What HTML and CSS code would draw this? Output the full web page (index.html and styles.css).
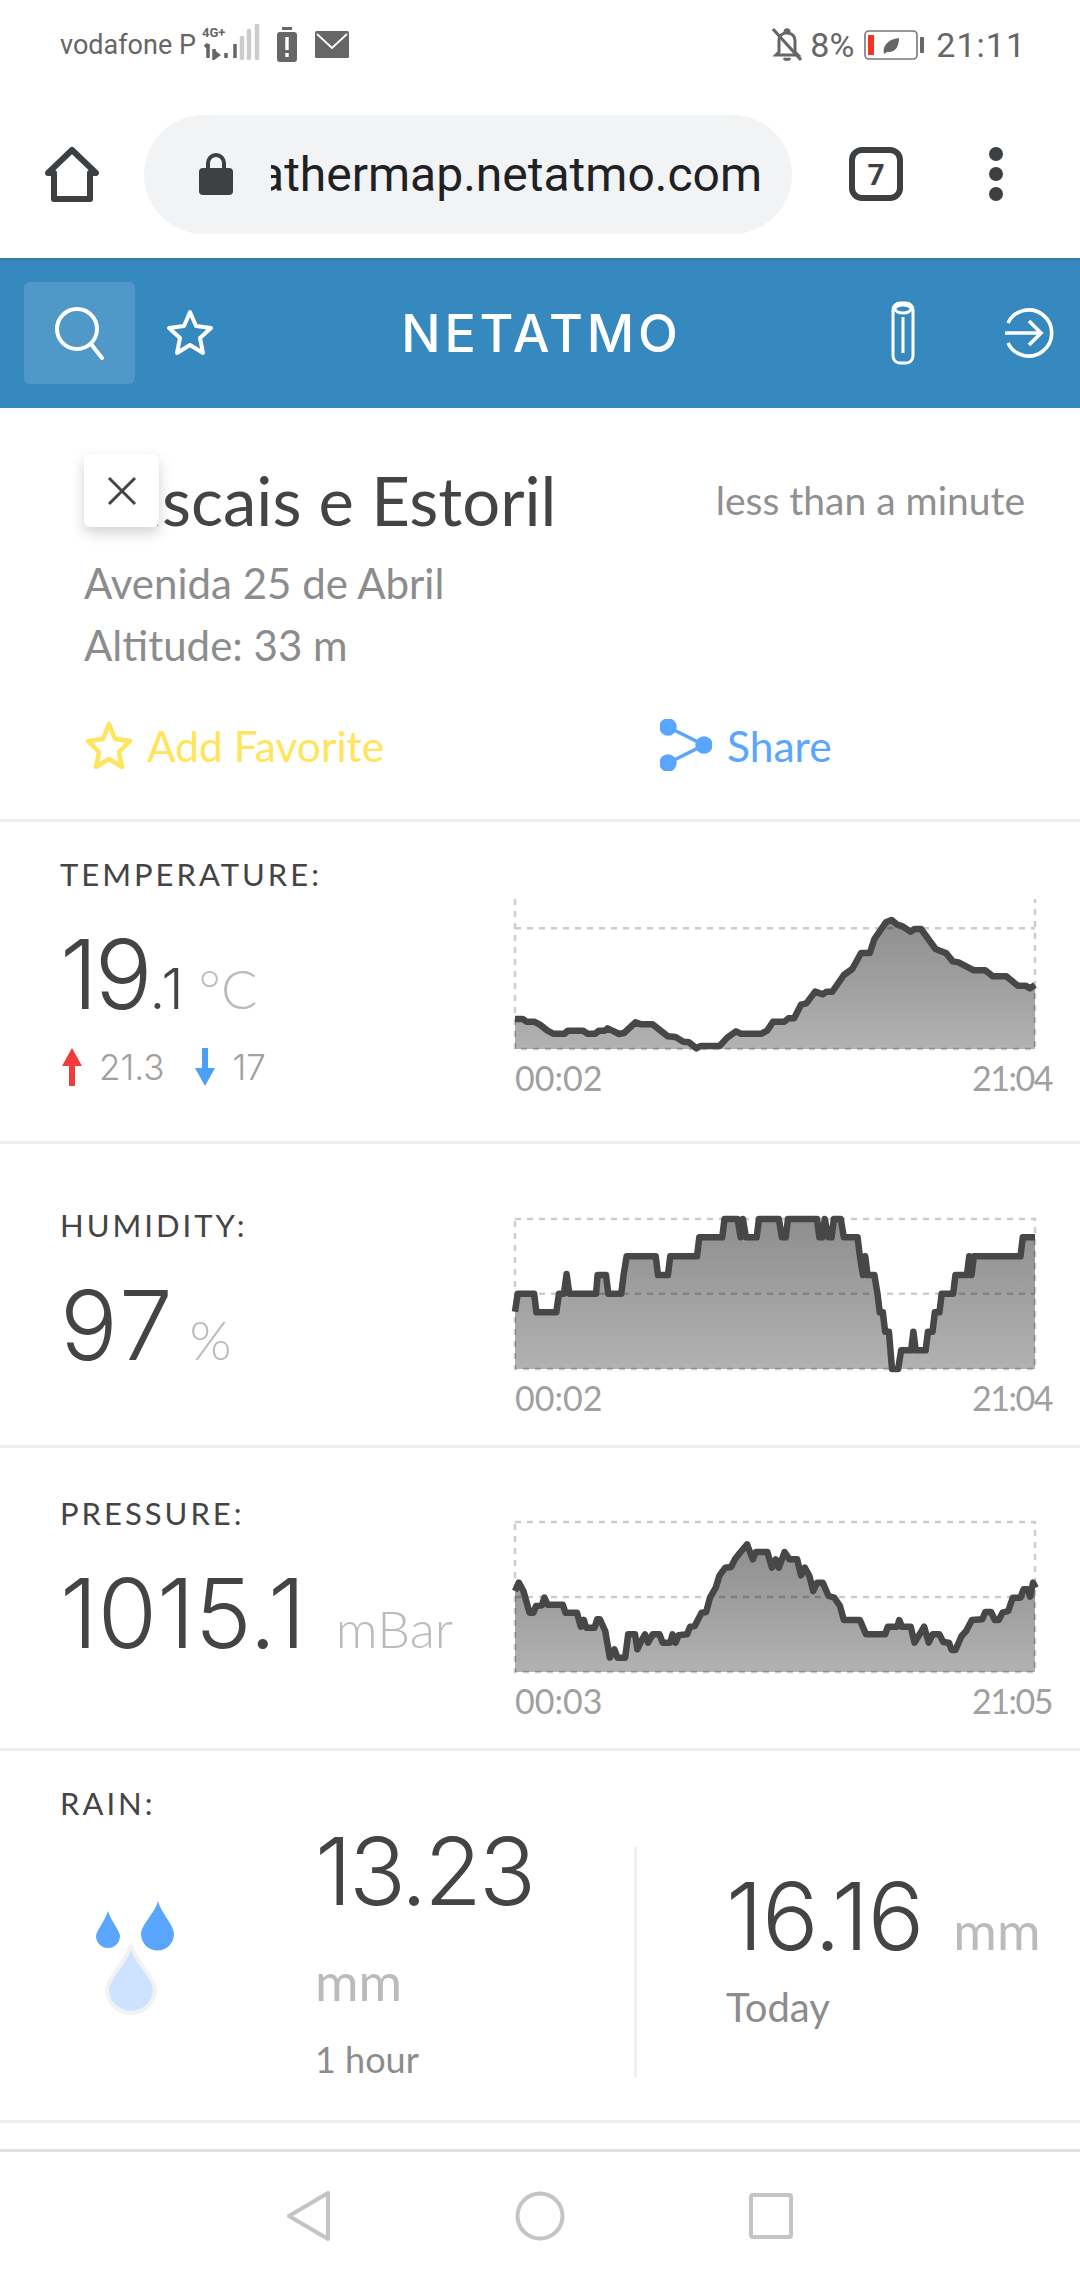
FILE: index.html
```html
<!DOCTYPE html>
<html lang="en">
<head>
  <meta charset="UTF-8" />
  <meta name="viewport" content="width=device-width, initial-scale=1.0"/>
  <title>Netatmo Weathermap</title>
  <link rel="stylesheet" href="styles.css">
</head>
<body>
  <div class="status-bar">
    <div class="status-left">
      <span class="carrier">vodafone P</span>
      <svg class="signal" width="62" height="36" viewBox="0 0 62 36">
        <text x="3" y="13" class="net-type">4G+</text>
        <path d="M9 20v14M6 23l3-3M15 25v9l4-3-4-3M27 29v5M36 20v14" stroke="#666" stroke-width="3.5" fill="none"/>
        <path d="M43 14v20M50 7v27M58 1v33" stroke="#ccc" stroke-width="4.5" stroke-linecap="round" fill="none"/>
      </svg>
      <svg class="alert-batt" width="20" height="35" viewBox="0 0 20 35">
        <rect x="5" y="0" width="10" height="3" fill="#666"/>
        <rect x="0" y="5" width="20" height="30" rx="3" fill="#666"/>
        <path d="M10 10v13M10 26v4" stroke="#fff" stroke-width="3.4"/>
      </svg>
      <svg class="mail" width="34" height="27" viewBox="0 0 34 27">
        <rect width="34" height="27" rx="1.5" fill="#666"/>
        <path d="M2 3l15 14L32 3" stroke="#fff" stroke-width="1.8" fill="none"/>
      </svg>
    </div>
    <div class="status-right">
      <svg width="30" height="34" viewBox="0 0 30 34" fill="none" stroke="#666" stroke-width="3">
        <path d="M7 12c0-4 3-7 8-7s8 3 8 8v11l3 3H4l3-3zM12 30c1 2 5 2 6 0M13 4c0-3 4-3 4 0"/>
        <path d="M1 1l28 31" stroke-width="3"/>
      </svg>
      <span class="batt-pct">8%</span>
      <svg width="60" height="30" viewBox="0 0 60 30">
        <rect x="1" y="1" width="52" height="28" rx="4" fill="#fff" stroke="#777" stroke-width="1.6"/>
        <rect x="4" y="5" width="6" height="20" fill="#f5331f"/>
        <path d="M20 24c-2-8 4-15 15-16 0 9-4 15-12 14z" fill="#666"/>
        <rect x="56" y="7" width="4" height="16" rx="1" fill="#666"/>
      </svg>
      <span class="clock">21:11</span>
    </div>
  </div>

  <div class="browser-bar">
    <svg class="home-icon" width="54" height="56" viewBox="0 0 54 56" fill="none" stroke="#3c4043" stroke-width="6" stroke-linejoin="round">
      <path d="M3 27L27 4l24 23h-6v26H9V27z"/>
    </svg>
    <div class="url-pill">
      <svg width="34" height="42" viewBox="0 0 34 42">
        <path d="M9 17V10a8 8 0 0 1 16 0v7" fill="none" stroke="#3c4043" stroke-width="4"/>
        <rect x="0" y="15" width="34" height="27" rx="4" fill="#3c4043"/>
      </svg>
      <div class="url-text"><span>weathermap.netatmo.com</span></div>
    </div>
    <div class="tab-count">7</div>
    <div class="menu-dots"><i></i><i></i><i></i></div>
  </div>

  <header class="site-header">
    <div class="header-left">
      <div class="search-btn">
        <svg width="52" height="54" viewBox="0 0 52 54" fill="none" stroke="#fff" stroke-width="4">
          <circle cx="23" cy="23" r="20"/>
          <path d="M37 38l11 14" stroke-linecap="round"/>
        </svg>
      </div>
      <svg class="star" width="48" height="48" viewBox="0 0 48 48" fill="none" stroke="#fff" stroke-width="4" stroke-linejoin="round">
        <path d="M24 3l6 14 15 2-11 10 3 15-13-8-13 8 3-15L3 19l15-2z"/>
      </svg>
    </div>
    <div class="logo">NETATMO</div>
    <div class="header-right">
      <svg width="24" height="64" viewBox="0 0 24 64" fill="none" stroke="#fff" stroke-width="3">
        <rect x="2" y="2" width="20" height="60" rx="7"/>
        <ellipse cx="12" cy="8" rx="8" ry="4"/>
        <path d="M12 16v36"/>
      </svg>
      <svg width="52" height="52" viewBox="0 0 52 52" fill="none" stroke="#fff" stroke-width="3.6">
        <path d="M5 16a23 23 0 1 1 0 20"/>
        <path d="M2 26h34M26 14l12 12-12 12"/>
      </svg>
    </div>
  </header>

  <section class="station">
    <div class="close-btn">
      <svg width="30" height="30" viewBox="0 0 30 30" stroke="#444" stroke-width="3"><path d="M2 2l26 26M28 2L2 28"/></svg>
    </div>
    <div class="title-row">
      <h1>Cascais e Estoril</h1>
      <span class="updated">less than a minute</span>
    </div>
    <div class="station-info">Avenida 25 de Abril</div>
    <div class="station-info">Altitude: 33 m</div>
    <div class="actions">
      <a class="action fav">
        <svg width="46" height="48" viewBox="0 0 46 48" fill="none" stroke="#ffe45c" stroke-width="4.5" stroke-linejoin="round"><path d="M23 3l6 15 15 2-11 11 3 15-13-8-13 8 3-15L2 20l15-2z"/></svg>
        Add Favorite
      </a>
      <a class="action share">
        <svg width="52" height="52" viewBox="0 0 52 52" fill="#5aa5ff" stroke="#5aa5ff" stroke-width="3.5"><circle cx="8" cy="8" r="7"/><circle cx="44" cy="26" r="7"/><circle cx="8" cy="44" r="7"/><path d="M8 8l36 18L8 44" fill="none"/></svg>
        Share
      </a>
    </div>
  </section>

  <section class="metric metric-temp">
    <div class="metric-main">
      <div class="metric-label">TEMPERATURE:</div>
      <div class="reading"><span class="big">19</span><span class="decimal">.1</span><span class="unit">°C</span></div>
      <div class="minmax">
        <svg width="22" height="38" viewBox="0 0 22 38" fill="#f23b3b"><path d="M11 0l10 18h-7v20H8V18H1z"/></svg>
        <span>21.3</span>
        <svg class="down" width="22" height="38" viewBox="0 0 22 38" fill="#4ba0f5"><path d="M11 38l10-18h-7V0H8v20H1z"/></svg>
        <span>17</span>
      </div>
    </div>
    <div class="chart">
      <svg width="520" height="150" viewBox="90 120 1360 450" preserveAspectRatio="none">
        <defs>
          <linearGradient id="areaFill" x1="0" y1="0" x2="0" y2="1">
            <stop offset="0" stop-color="#8e8e8e"/>
            <stop offset="1" stop-color="#b2b2b2"/>
          </linearGradient>
        </defs>
        <path class="area" d="M90 480L110 480 120 488 140 488 155 497 175 515 190 524 220 524 228 515 268 515 280 524 300 524 310 515 325 515 332 508 345 515 362 525 375 522 405 490 420 496 450 496 490 532 510 534 530 548 545 550 565 568 575 561 625 561 645 536 668 517 680 524 735 524 750 514 765 488 795 488 805 478 820 478 838 437 852 433 875 398 895 406 905 398 920 398 950 348 972 330 995 282 1018 282 1030 240 1060 190 1075 183 1090 197 1105 203 1125 218 1135 210 1152 210 1190 270 1218 283 1235 307 1250 310 1290 334 1320 334 1340 352 1375 352 1405 380 1425 380 1437 388 1450 378V570H90z"/>
        <path class="dash" d="M90 120V570H1450V120M90 208H1450"/>
        <path class="line" d="M90 480L110 480 120 488 140 488 155 497 175 515 190 524 220 524 228 515 268 515 280 524 300 524 310 515 325 515 332 508 345 515 362 525 375 522 405 490 420 496 450 496 490 532 510 534 530 548 545 550 565 568 575 561 625 561 645 536 668 517 680 524 735 524 750 514 765 488 795 488 805 478 820 478 838 437 852 433 875 398 895 406 905 398 920 398 950 348 972 330 995 282 1018 282 1030 240 1060 190 1075 183 1090 197 1105 203 1125 218 1135 210 1152 210 1190 270 1218 283 1235 307 1250 310 1290 334 1320 334 1340 352 1375 352 1405 380 1425 380 1437 388 1450 378"/>
      </svg>
      <div class="chart-times"><span>00:02</span><span>21:04</span></div>
    </div>
  </section>

  <section class="metric metric-hum">
    <div class="metric-main">
      <div class="metric-label">HUMIDITY:</div>
      <div class="reading"><span class="big">97</span><span class="unit">%</span></div>
    </div>
    <div class="chart">
      <svg width="520" height="150" viewBox="90 90 1360 450" preserveAspectRatio="none">
        <path class="area" d="M90 368L97 314 140 314 146 370 198 370 205 314 218 314 225 255 232 314 302 314 306 258 328 258 334 314 368 314 374 258 382 202 458 202 464 258 490 258 496 202 566 202 572 145 632 145 638 90 672 90 680 145 686 90 694 145 722 145 728 90 780 90 788 145 798 145 804 90 880 90 886 145 894 145 900 90 910 145 918 145 924 90 942 90 950 145 986 145 992 202 1000 258 1006 202 1012 258 1030 258 1038 314 1044 370 1052 370 1058 428 1068 428 1076 540 1092 540 1100 484 1126 484 1132 428 1138 484 1164 484 1170 428 1182 428 1188 370 1200 370 1206 314 1236 314 1242 258 1272 258 1278 202 1284 258 1290 202 1412 202 1418 145 1450 145V540H90z"/>
        <path class="dash" d="M90 90H1450V540H90zM90 314H1450"/>
        <path class="line" d="M90 368L97 314 140 314 146 370 198 370 205 314 218 314 225 255 232 314 302 314 306 258 328 258 334 314 368 314 374 258 382 202 458 202 464 258 490 258 496 202 566 202 572 145 632 145 638 90 672 90 680 145 686 90 694 145 722 145 728 90 780 90 788 145 798 145 804 90 880 90 886 145 894 145 900 90 910 145 918 145 924 90 942 90 950 145 986 145 992 202 1000 258 1006 202 1012 258 1030 258 1038 314 1044 370 1052 370 1058 428 1068 428 1076 540 1092 540 1100 484 1126 484 1132 428 1138 484 1164 484 1170 428 1182 428 1188 370 1200 370 1206 314 1236 314 1242 258 1272 258 1278 202 1284 258 1290 202 1412 202 1418 145 1450 145"/>
      </svg>
      <div class="chart-times"><span>00:02</span><span>21:04</span></div>
    </div>
  </section>

  <section class="metric metric-press">
    <div class="metric-main">
      <div class="metric-label">PRESSURE:</div>
      <div class="reading"><span class="big">1015.1</span><span class="unit unit-wide">mBar</span></div>
    </div>
    <div class="chart">
      <svg width="520" height="150" viewBox="90 68 1360 450" preserveAspectRatio="none">
        <path class="area" d="M90 275L100 250 112 275 128 340 138 340 145 320 160 318 167 295 175 316 215 316 222 340 252 340 262 382 270 362 276 385 298 385 305 360 312 360 326 395 338 475 350 450 358 475 378 475 386 405 404 405 410 450 418 430 430 405 438 430 450 405 468 405 476 430 496 430 502 405 510 430 518 408 540 405 548 382 560 380 578 340 590 338 600 295 615 265 625 228 640 205 655 203 665 180 680 158 697 135 712 180 720 158 750 158 762 205 772 180 780 205 795 158 808 180 828 180 838 228 848 205 860 230 870 275 880 250 895 250 910 290 925 295 940 320 950 362 992 362 1008 405 1058 405 1065 382 1090 382 1095 362 1102 382 1125 382 1135 430 1148 405 1160 382 1172 430 1182 405 1200 405 1210 428 1225 430 1232 452 1242 452 1258 410 1270 395 1285 362 1312 360 1320 338 1335 338 1345 362 1355 362 1365 340 1380 335 1392 295 1412 295 1420 270 1432 270 1437 292 1445 250 1450 262V518H90z"/>
        <path class="dash" d="M90 68H1450V518H90zM90 293H1450"/>
        <path class="line" d="M90 275L100 250 112 275 128 340 138 340 145 320 160 318 167 295 175 316 215 316 222 340 252 340 262 382 270 362 276 385 298 385 305 360 312 360 326 395 338 475 350 450 358 475 378 475 386 405 404 405 410 450 418 430 430 405 438 430 450 405 468 405 476 430 496 430 502 405 510 430 518 408 540 405 548 382 560 380 578 340 590 338 600 295 615 265 625 228 640 205 655 203 665 180 680 158 697 135 712 180 720 158 750 158 762 205 772 180 780 205 795 158 808 180 828 180 838 228 848 205 860 230 870 275 880 250 895 250 910 290 925 295 940 320 950 362 992 362 1008 405 1058 405 1065 382 1090 382 1095 362 1102 382 1125 382 1135 430 1148 405 1160 382 1172 430 1182 405 1200 405 1210 428 1225 430 1232 452 1242 452 1258 410 1270 395 1285 362 1312 360 1320 338 1335 338 1345 362 1355 362 1365 340 1380 335 1392 295 1412 295 1420 270 1432 270 1437 292 1445 250 1452 265"/>
      </svg>
      <div class="chart-times"><span>00:03</span><span>21:05</span></div>
    </div>
  </section>

  <section class="rain">
    <div class="metric-label">RAIN:</div>
    <div class="rain-body">
      <svg class="drops" width="80" height="114" viewBox="0 0 80 114">
        <path d="M12 10c3 10 12 20 12 25a12 12 0 0 1-24 0c0-5 9-15 12-25z" fill="#5aa5ff"/>
        <path d="M62 0c3 12 16 24 16 33a16.500 16.500 0 0 1-33 0C45 24 59 12 62 0z" fill="#5aa5ff"/>
        <path d="M35 44c4 16 24 34 24 44a24 24 0 0 1-48 0c0-10 20-28 24-44z" fill="#cde3ff" stroke="#f2f2f2" stroke-width="4"/>
      </svg>
      <div class="rain-col rain-hour">
        <div class="rain-num">13.23</div>
        <div class="rain-unit">mm</div>
        <div class="rain-note">1 hour</div>
      </div>
      <div class="rain-col rain-day">
        <div class="rain-line"><span class="rain-num">16.16</span><span class="rain-unit">mm</span></div>
        <div class="rain-note">Today</div>
      </div>
    </div>
  </section>

  <div class="next-peek"></div>

  <nav class="nav-bar">
    <svg width="44" height="50" viewBox="0 0 44 50" fill="none" stroke="#c4c4c4" stroke-width="4" stroke-linejoin="round"><path d="M41 2v46L2 25z"/></svg>
    <svg width="50" height="50" viewBox="0 0 50 50" fill="none" stroke="#c4c4c4" stroke-width="4"><circle cx="25" cy="25" r="22.500"/></svg>
    <svg width="44" height="46" viewBox="0 0 44 46" fill="none" stroke="#c4c4c4" stroke-width="4"><rect x="2" y="2" width="40" height="42" rx="2"/></svg>
  </nav>
</body>
</html>
```

FILE: styles.css
```css
body {
  margin: 0;
  width: 1080px;
  height: 2280px;
  overflow: hidden;
  background: white;
  font-family: 'Lato', sans-serif;
  color: #444;
}

/* phone + browser chrome */

.status-bar {
  height: 90px;
  display: flex;
  justify-content: space-between;
  align-items: center;
  padding: 0 54px 0 60px;
  font-family: 'Roboto', sans-serif;
  color: #666;
  box-sizing: border-box;
}

.status-left, .status-right {
  display: flex;
  align-items: center;
}

.carrier { font-size: 27px; }
.signal { margin: -6px 0 0 3px; }
.net-type { font: bold 13px 'Roboto', sans-serif; fill: #666; }
.alert-batt { margin: -2px 0 0 16px; }
.mail { margin: -1px 0 0 18px; }

.batt-pct { font-size: 34px; margin: 0 10px 0 8px; }
.clock { font-size: 34px; margin-left: 12px; letter-spacing: 1px; }

.browser-bar {
  height: 168px;
  display: flex;
  align-items: center;
  box-sizing: border-box;
}

.home-icon { margin-left: 45px; }

.url-pill {
  width: 648px;
  height: 119px;
  margin-left: 45px;
  background: #f1f3f4;
  border-radius: 60px;
  display: flex;
  align-items: center;
  padding: 0 30px 0 55px;
  box-sizing: border-box;
}

.url-text {
  flex: 1;
  margin-left: 38px;
  overflow: hidden;
  display: flex;
  justify-content: flex-end;
  white-space: nowrap;
  font: 48px 'Roboto', sans-serif;
  color: #202124;
}

.tab-count {
  width: 54px;
  height: 54px;
  margin-left: 57px;
  border: 6px solid #3c4043;
  border-radius: 13px;
  box-sizing: border-box;
  display: flex;
  align-items: center;
  justify-content: center;
  font: bold 30px 'Roboto', sans-serif;
  color: #3c4043;
}

.menu-dots {
  margin-left: 86px;
  display: flex;
  flex-direction: column;
  gap: 6px;
}

.menu-dots i {
  display: block;
  width: 14px;
  height: 14px;
  border-radius: 50%;
  background: #3c4043;
}

/* site header */

.site-header {
  height: 150px;
  background: #3689bf;
  box-shadow: inset 0 4px 3px -2px rgba(0, 0, 0, 0.12);
  display: flex;
  align-items: center;
  justify-content: space-between;
  position: relative;
  color: white;
}

.header-left {
  display: flex;
  align-items: center;
  margin-left: 24px;
}

.search-btn {
  width: 111px;
  height: 102px;
  background: rgba(255, 255, 255, 0.13);
  border-radius: 6px;
  display: flex;
  align-items: center;
  justify-content: center;
}

.star { margin-left: 31px; }

.logo {
  font-family: 'Inter', sans-serif;
  font-size: 52px;
  font-weight: 500;
  letter-spacing: 3.8px;
  margin-left: -22px;
}

.header-right {
  display: flex;
  align-items: center;
  gap: 88px;
  margin-right: 25px;
}

/* station details */

.station {
  height: 414px;
  padding: 0 55px 0 84px;
  box-sizing: border-box;
  position: relative;
  border-bottom: 3px solid #eee;
}

.close-btn {
  position: absolute;
  left: 84px;
  top: 46px;
  width: 75px;
  height: 73px;
  background: white;
  border-radius: 6px;
  box-shadow: 0 6px 14px rgba(0, 0, 0, 0.18);
  display: flex;
  align-items: center;
  justify-content: center;
}

.title-row {
  display: flex;
  justify-content: space-between;
  align-items: center;
  padding-top: 56px;
  margin-bottom: 16px;
}

h1 {
  margin: 0;
  font-size: 67px;
  font-weight: 400;
  line-height: 72px;
}

.updated { font-size: 39px; color: #909090; }

.station-info {
  font-size: 42px;
  line-height: 62px;
  color: #8c8c8c;
}

.actions {
  display: flex;
  margin-top: 43px;
}

.action {
  display: flex;
  align-items: center;
  gap: 15px;
  font-size: 42.5px;
}

.fav { color: #ffe45c; width: 574px; padding-left: 2px; }
.share { color: #5aa5ff; }

/* metric rows */

.metric {
  display: flex;
  justify-content: space-between;
  box-sizing: border-box;
  padding: 0 28px 0 60px;
  border-bottom: 3px solid #eee;
}

.metric-temp { height: 322px; }
.metric-hum { height: 304px; }
.metric-press { height: 303px; }

.metric-temp .metric-main { padding-top: 34px; }
.metric-hum .metric-main { padding-top: 63px; }
.metric-press .metric-main { padding-top: 47px; }

.metric-label {
  font-size: 31px;
  letter-spacing: 3px;
  line-height: 36px;
  color: #444;
}

.reading {
  display: flex;
  align-items: baseline;
  margin-top: 27px;
  white-space: nowrap;
  font-family: 'Inter', sans-serif;
  font-weight: 300;
}

.big { font-size: 96px; letter-spacing: 0; line-height: 110px; }
.metric-temp .big { letter-spacing: -3px; }
.metric-hum .big { letter-spacing: 3px; }
.decimal { font-size: 56px; letter-spacing: 1px; }
.unit { font-family: 'Lato', sans-serif; font-size: 54px; color: #bbb; margin-left: 14px; }
.metric-temp .unit { margin-left: 14px; }
.unit-wide { font-size: 52px; margin-left: 30px; }

.minmax {
  display: flex;
  align-items: center;
  font-family: 'Inter', sans-serif;
  font-weight: 300;
  font-size: 35px;
  color: #a0a0a0;
  gap: 16px;
  margin-left: 1px;
  margin-top: 17px;
}

.minmax .down { margin-left: 14px; }

.chart { width: 537px; padding-top: 74px; }
.metric-temp .chart { padding-top: 77px; }
.metric-hum .chart { padding-top: 75px; }
.chart svg { display: block; overflow: visible; }

.area { fill: url(#areaFill); }

.dash {
  fill: none;
  stroke: rgba(0, 0, 0, 0.2);
  stroke-width: 2.5px;
  stroke-dasharray: 6 6;
  vector-effect: non-scaling-stroke;
}

.line {
  fill: none;
  stroke: #474747;
  stroke-width: 6.5px;
  stroke-linejoin: round;
  vector-effect: non-scaling-stroke;
}

.chart-times {
  display: flex;
  justify-content: space-between;
  font-size: 34px;
  line-height: 40px;
  margin-top: 9px;
  color: #a0a0a0;
}

.chart-times span:last-child { letter-spacing: -1.5px; }

/* rain */

.rain {
  height: 372px;
  padding: 34px 0 0 60px;
  box-sizing: border-box;
  border-bottom: 3px solid #eee;
}

.rain-body {
  display: flex;
  align-items: flex-start;
}

.drops { margin: 80px 0 0 36px; }

.rain-num {
  font-family: 'Inter', sans-serif;
  font-weight: 300;
  font-size: 94px;
  letter-spacing: -3px;
  line-height: 100px;
}

.rain-unit { font-size: 53px; color: #bbb; }
.rain-note { font-size: 40px; color: #8c8c8c; }

.rain-hour {
  width: 319px;
  height: 230px;
  margin-left: 139px;
  border-right: 3px solid #f0f0f0;
  margin-top: 26px;
}

.rain-hour .rain-num { margin-top: -26px; }
.rain-hour .rain-unit { margin-top: 30px; line-height: 60px; }
.rain-hour .rain-note { margin-top: 26px; font-size: 36px; }

.rain-day { margin: 0 0 0 89px; }
.rain-line { display: flex; align-items: baseline; gap: 30px; white-space: nowrap; margin-top: 45px; }
.rain-day .rain-num { letter-spacing: -1px; }
.rain-day .rain-note { margin-top: 17px; }

.next-peek { height: 26px; }

.nav-bar {
  height: 130px;
  border-top: 3px solid #e0e0e0;
  box-sizing: border-box;
  display: flex;
  align-items: center;
  justify-content: center;
  gap: 184px;
}
```
